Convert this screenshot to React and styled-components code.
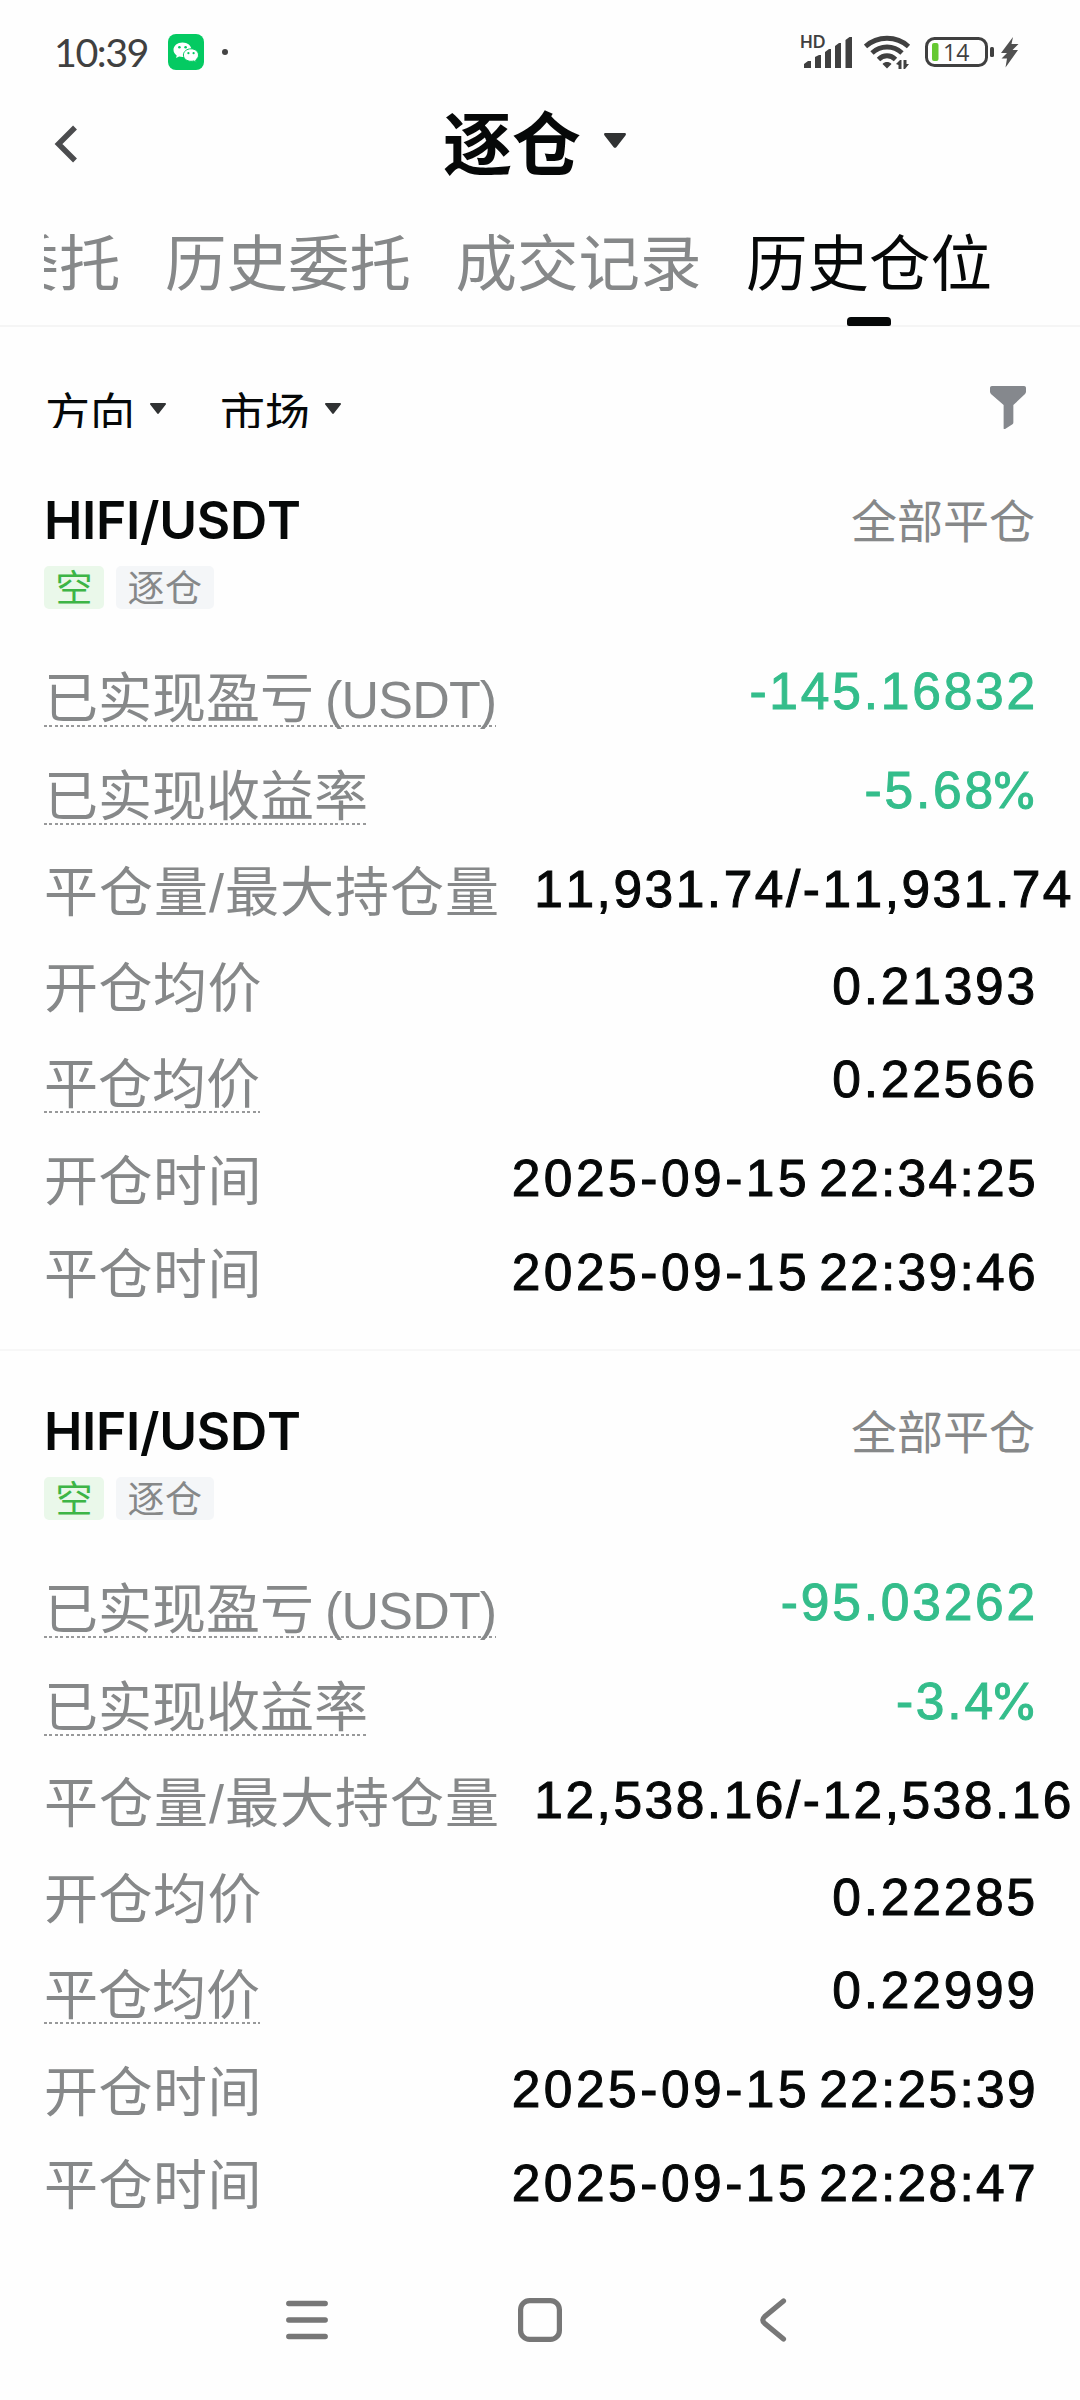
import React from "react";
import styled, { createGlobalStyle } from "styled-components";

const GlobalStyle = createGlobalStyle`
  body {
    margin: 0;
    background: #fefefe;
  }
`;

const Screen = styled.div`
  width: 1080px;
  height: 2400px;
  overflow: hidden;
  display: flex;
  flex-direction: column;
  background: #fefefe;
  color: #060808;
  font-family: "Liberation Sans", "Noto Sans CJK SC", sans-serif;
  font-kerning: none;
  white-space: nowrap;
`;

const StatusBar = styled.header`
  height: 104px;
  box-sizing: border-box;
  padding: 0 61px 0 54px;
  display: flex;
  align-items: center;
  justify-content: space-between;
  flex-shrink: 0;
`;

const StatusGroup = styled.div`
  display: flex;
  align-items: center;
`;

const Clock = styled.span`
  width: 114px;
  font-family: Lato, sans-serif;
  font-size: 39.5px;
  line-height: 48px;
  letter-spacing: -1.5px;
  color: #404040;
`;

const Dot = styled.span`
  width: 6px;
  height: 6px;
  margin-left: 18px;
  border-radius: 50%;
  background: #444;
`;

const IconSlot = styled.span`
  display: flex;
  margin-left: ${(props) => props.$gap || 0}px;
`;

const TitleBar = styled.div`
  height: 80px;
  padding: 0 54px;
  display: grid;
  grid-template-columns: 120px 1fr 120px;
  align-items: center;
  flex-shrink: 0;
`;

const Title = styled.h1`
  margin: 0;
  display: flex;
  align-items: center;
  justify-content: center;
  gap: 23px;
  padding: 3px 11px 0 0;
  font-size: 69px;
  font-weight: 700;
  line-height: 80px;

  svg {
    margin-bottom: 14px;
  }
`;

const Tabs = styled.nav`
  height: 143px;
  box-sizing: border-box;
  border-bottom: 2px solid #f5f5f5;
  padding-left: 44px;
  flex-shrink: 0;
`;

const TabTrack = styled.div`
  height: 143px;
  overflow: hidden;
  display: flex;
  justify-content: flex-end;
  gap: 44.5px;
  padding-right: 88px;
`;

const Tab = styled.div`
  display: flex;
  flex-direction: column;
  align-items: center;
  justify-content: space-between;
  box-sizing: border-box;
  padding-top: 43px;
  flex-shrink: 0;
  font-size: 61.5px;
  line-height: 76px;
  color: ${(props) => (props.$active ? "#060808" : "#868889")};

  &::after {
    content: "";
    width: 44px;
    height: 9px;
    margin-bottom: 1px;
    border-radius: 4px 4px 2px 2px;
    background: ${(props) => (props.$active ? "#060808" : "transparent")};
  }
`;

const FilterBar = styled.div`
  height: 113px;
  box-sizing: border-box;
  padding: 59px 54px 0 45px;
  display: flex;
  align-items: flex-start;
  flex-shrink: 0;
`;

const FilterItem = styled.div`
  display: flex;
  gap: 15px;
  margin-right: 54px;

  svg {
    margin-top: 17px;
  }
`;

// the label box is shorter than the glyphs and cuts their feet
const FilterLabel = styled.span`
  height: 42px;
  overflow: hidden;
  font-size: 45px;
  line-height: 59px;
`;

const FunnelButton = styled.div`
  margin-left: auto;
  display: flex;
`;

const Card = styled.section`
  height: 911px;
  box-sizing: border-box;
  padding: 55px 45px 0 44px;
  border-bottom: 2px solid ${(props) => (props.$last ? "transparent" : "#f7f7f7")};
  flex-shrink: 0;
`;

const CardHead = styled.div`
  height: 71px;
  display: flex;
  justify-content: space-between;
  align-items: flex-start;
`;

const Pair = styled.h2`
  margin: 0;
  font-family: Inter, sans-serif;
  font-size: 51.5px;
  font-weight: 600;
  line-height: 50px;
  letter-spacing: -0.3px;
`;

const CloseState = styled.span`
  font-size: 46px;
  line-height: 54px;
  color: #868889;
`;

const Tags = styled.div`
  display: flex;
  gap: 12px;
  height: 43px;
`;

const Tag = styled.span`
  padding: 0 11.5px;
  border-radius: 5px;
  font-size: 37px;
  line-height: 48px;
  letter-spacing: ${(props) => (props.$side ? 0 : "0.5px")};
  color: ${(props) => (props.$side ? "#3db546" : "#868889")};
  background: ${(props) => (props.$side ? "#eaf8ea" : "#f4f6f8")};
`;

const Rows = styled.div`
  padding-top: 57px;
`;

const Row = styled.div`
  height: ${(props) => props.$height}px;
  display: flex;
  justify-content: space-between;
  align-items: flex-start;
`;

const Label = styled.span`
  height: 61px;
  font-size: 54px;
  line-height: 66px;
  letter-spacing: ${(props) => (props.$dotted ? 0 : props.$wide ? 1 : 0.5)}px;
  color: #868889;
  ${(props) =>
    props.$dotted &&
    `background: repeating-linear-gradient(90deg, #98999a 0 3px, transparent 3px 5.5px) 0 100% / 100% 2.5px no-repeat;`}
`;

const Latin = styled.span`
  margin-left: 11px;
  font-size: 52px;
  letter-spacing: -0.8px;
`;

const Value = styled.span`
  margin-top: ${(props) => props.$top - 1.5}px;
  margin-right: ${(props) => (props.$wide ? -39 : -3)}px;
  font-size: 51.5px;
  line-height: 52px;
  letter-spacing: ${(props) => (props.$wide ? 2.5 : 2.8)}px;
  color: ${(props) => (props.$loss ? "#34bd8b" : "#060808")};
  -webkit-text-stroke: 1px currentColor;
`;

const Day = styled.span`
  letter-spacing: 3.5px;
`;

const Time = styled.span`
  margin-left: 9px;
  letter-spacing: 2.3px;
`;

const Percent = styled.span`
  margin-left: -6px;
  font-family: Inter, sans-serif;
  font-size: 49px;
  letter-spacing: 0;
`;

const SystemNav = styled.footer`
  height: 116px;
  box-sizing: border-box;
  padding: 0 293px 0 286px;
  display: flex;
  justify-content: space-between;
  align-items: center;
  flex-shrink: 0;
`;

const WeChatIcon = () => (
  <svg width="36" height="36" viewBox="0 0 36 36">
    <rect width="36" height="36" rx="8" fill="#04ca62" />
    <path d="M14.500 8.500c-5 0-9 3.200-9 7.300 0 2.300 1.300 4.300 3.200 5.600l-.6 2.600 3-1.500c1.100.3 2.200.5 3.400.5 5 0 9-3.100 9-7.200s-4-7.300-9-7.300z" fill="#fff" />
    <path d="M23 14.800c-4.300 0-7.600 2.800-7.600 6.200s3.300 6.300 7.600 6.300c1 0 2-.2 2.800-.4l2.500 1.300-.6-2.200c1.700-1.200 2.800-3 2.800-5 0-3.400-3.300-6.200-7.500-6.200z" fill="#fff" stroke="#04ca62" strokeWidth="1" />
    <g fill="#04ca62">
      <circle cx="11.400" cy="13.200" r="1.300" />
      <circle cx="17.600" cy="13.200" r="1.300" />
      <circle cx="20.400" cy="19.200" r="1.100" />
      <circle cx="25.600" cy="19.200" r="1.100" />
    </g>
  </svg>
);

const SignalIcon = () => (
  <svg width="52" height="36" viewBox="0 0 52 36" overflow="visible">
    <text x="-1" y="14" fontFamily="Lato, sans-serif" fontSize="16.500" fontWeight="700" fill="#404040">
      HD
    </text>
    <g fill="#404040">
      <path d="M3 34v-4l4-3h3v7zM14 34V23l4-2h2v13zM24 34V18l4-3h2v19zM34 34V12l4-3h2v25zM44.500 34V6l4-3h2.500v31z" />
    </g>
  </svg>
);

const WifiIcon = () => (
  <svg width="47" height="36" viewBox="0 0 47 36">
    <g fill="none" stroke="#404040" strokeWidth="4.800">
      <path d="M1.500 12.500C13.500 1.500 32.500 1.500 44.500 12.500" />
      <path d="M8 19C16.500 11 29.500 11 38 19" />
      <path d="M14.500 25.500C19.500 20.500 26.500 20.500 31.500 25.500" />
    </g>
    <path d="M18.500 30c2.500-2.600 6.500-2.600 9 0L23 34.500z" fill="#404040" />
    <path d="M32 30l4-4h1.500v9h-3v-4zM39.500 26h3v4H45l-4 5h-1.500z" fill="#404040" />
  </svg>
);

const BatteryIcon = () => (
  <svg width="70" height="32" viewBox="0 0 70 32">
    <rect x="1.500" y="2.500" width="60" height="27" rx="8" fill="none" stroke="#404040" strokeWidth="3" />
    <rect x="65" y="11" width="4" height="10" rx="1.500" fill="#404040" />
    <rect x="7" y="7" width="6.500" height="18" rx="2" fill="#65c831" />
    <text x="18" y="24.500" fontFamily="Open Sans, sans-serif" fontSize="23" fill="#404040">
      14
    </text>
  </svg>
);

const BoltIcon = () => (
  <svg width="19" height="32" viewBox="0 0 19 32">
    <path d="M13 1L1 17h6L1.500 22.500H7l-1.500 9L18 14h-5.500l6-6h-7z" fill="#505050" />
  </svg>
);

const BackIcon = () => (
  <svg width="24" height="42" viewBox="0 0 24 42">
    <path d="M21 2.500L4.500 19 21 35.500" fill="none" stroke="#4b4c4e" strokeWidth="5.500" />
  </svg>
);

const Caret = ({ width, height }) => (
  <svg width={width} height={height} viewBox="0 0 20 14" preserveAspectRatio="none">
    <path d="M1.500 0h17c1.400 0 1.900 1.200 1 2.300L11.200 13.200c-.7.900-1.700.9-2.400 0L.5 2.300C-.4 1.200.1 0 1.500 0z" fill="#303233" />
  </svg>
);

const FunnelIcon = () => (
  <svg width="36" height="43" viewBox="0 0 37 43" preserveAspectRatio="none">
    <path d="M2 0h33c1.200 0 2 .8 2 2v3.500c0 1-.3 1.800-1 2.600L24 19v17.500c0 .8-.3 1.300-.9 1.800L15.500 43c-.8.400-1.500.2-1.500-.8V19L1 8.100C.3 7.300 0 6.500 0 5.500V2C0 .8.800 0 2 0z" fill="#85888d" />
  </svg>
);

const MenuIcon = () => (
  <svg width="42" height="44" viewBox="0 0 42 44">
    <path d="M2.800 5.500h36.400M2.800 22h36.400M2.800 38.500h36.400" stroke="#777" strokeWidth="5.400" strokeLinecap="round" />
  </svg>
);

const HomeIcon = () => (
  <svg width="44" height="44" viewBox="0 0 44 44">
    <rect x="2.600" y="2.600" width="38.800" height="38.800" rx="9" fill="none" stroke="#777" strokeWidth="5.200" />
  </svg>
);

const NavBackIcon = () => (
  <svg width="35" height="44" viewBox="-7 0 35 44">
    <path d="M24.500 3L5.500 18.800Q2 22 5.500 25.200L24.500 41" fill="none" stroke="#777" strokeWidth="5.200" strokeLinecap="round" />
  </svg>
);

const rows = [
  { key: "pnl", label: "已实现盈亏", latin: "(USDT)", dotted: true, height: 98, top: 0, loss: true },
  { key: "rate", label: "已实现收益率", dotted: true, height: 96, top: 1, loss: true, percent: true },
  { key: "size", label: "平仓量/最大持仓量", height: 96, top: 4, wide: true },
  { key: "open", label: "开仓均价", height: 96, top: 5 },
  { key: "close", label: "平仓均价", dotted: true, height: 97, top: 2 },
  { key: "openTime", label: "开仓时间", height: 93, top: 4, time: true },
  { key: "closeTime", label: "平仓时间", height: 93, top: 5, time: true },
];

const positions = [
  {
    pnl: "-145.16832",
    rate: "-5.68",
    size: "11,931.74/-11,931.74",
    open: "0.21393",
    close: "0.22566",
    openTime: "2025-09-15 22:34:25",
    closeTime: "2025-09-15 22:39:46",
  },
  {
    pnl: "-95.03262",
    rate: "-3.4",
    size: "12,538.16/-12,538.16",
    open: "0.22285",
    close: "0.22999",
    openTime: "2025-09-15 22:25:39",
    closeTime: "2025-09-15 22:28:47",
  },
];

const DateTime = ({ value }) => {
  const [day, time] = value.split(" ");
  return (
    <>
      <Day>{day}</Day>
      <Time>{time}</Time>
    </>
  );
};

const PositionCard = ({ position, last }) => (
  <Card $last={last}>
    <CardHead>
      <Pair>HIFI/USDT</Pair>
      <CloseState>全部平仓</CloseState>
    </CardHead>
    <Tags>
      <Tag $side>空</Tag>
      <Tag>逐仓</Tag>
    </Tags>
    <Rows>
      {rows.map((row) => (
        <Row key={row.key} $height={row.height}>
          <Label $dotted={row.dotted} $wide={row.wide}>
            {row.label}
            {row.latin && <Latin>{row.latin}</Latin>}
          </Label>
          <Value $top={row.top} $wide={row.wide} $loss={row.loss}>
            {row.time ? <DateTime value={position[row.key]} /> : position[row.key]}
            {row.percent && <Percent>%</Percent>}
          </Value>
        </Row>
      ))}
    </Rows>
  </Card>
);

const App = () => {
  return (
    <Screen>
      <GlobalStyle />
      <StatusBar>
        <StatusGroup>
          <Clock>10:39</Clock>
          <WeChatIcon />
          <Dot />
        </StatusGroup>
        <StatusGroup>
          <IconSlot>
            <SignalIcon />
          </IconSlot>
          <IconSlot $gap={11}>
            <WifiIcon />
          </IconSlot>
          <IconSlot $gap={14}>
            <BatteryIcon />
          </IconSlot>
          <IconSlot $gap={5}>
            <BoltIcon />
          </IconSlot>
        </StatusGroup>
      </StatusBar>

      <TitleBar>
        <BackIcon />
        <Title>
          逐仓
          <Caret width={22} height={15} />
        </Title>
      </TitleBar>

      <Tabs>
        <TabTrack>
          <Tab>当前委托</Tab>
          <Tab>历史委托</Tab>
          <Tab>成交记录</Tab>
          <Tab $active>历史仓位</Tab>
        </TabTrack>
      </Tabs>

      <FilterBar>
        <FilterItem>
          <FilterLabel>方向</FilterLabel>
          <Caret width={16} height={11} />
        </FilterItem>
        <FilterItem>
          <FilterLabel>市场</FilterLabel>
          <Caret width={16} height={11} />
        </FilterItem>
        <FunnelButton>
          <FunnelIcon />
        </FunnelButton>
      </FilterBar>

      {positions.map((position, i) => (
        <PositionCard key={i} position={position} last={i === positions.length - 1} />
      ))}

      <SystemNav>
        <MenuIcon />
        <HomeIcon />
        <NavBackIcon />
      </SystemNav>
    </Screen>
  );
};

export default App;
